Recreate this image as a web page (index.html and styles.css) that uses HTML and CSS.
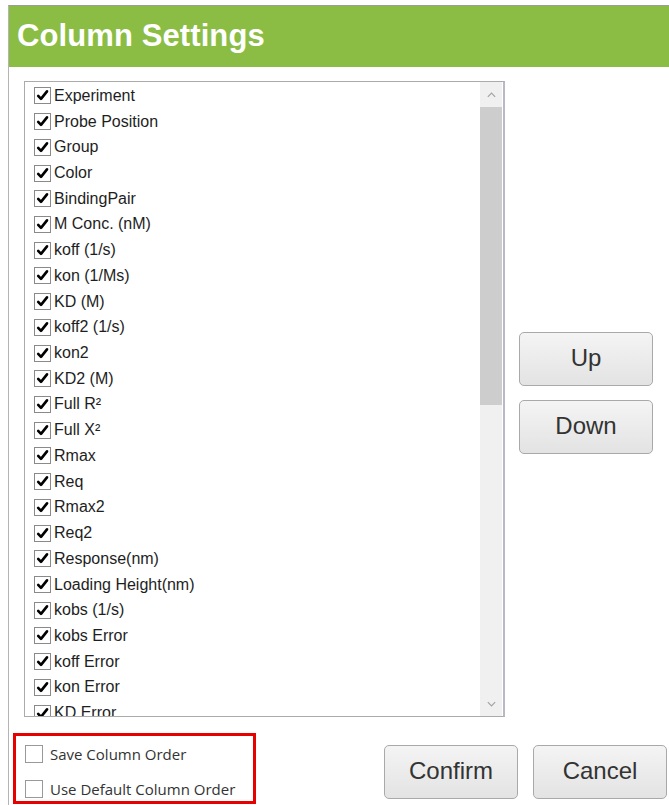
FILE: index.html
```html
<!DOCTYPE html>
<html lang="en">
<head>
<meta charset="utf-8">
<title>Column Settings</title>
<link rel="stylesheet" href="styles.css">
</head>
<body>
<div class="dialog">
  <header class="header"><h1 class="title">Column Settings</h1></header>

  <div class="main">
    <div class="listbox">
      <ul class="items">
        <li class="item"><span class="check"><svg viewBox="0 0 16 16"><path d="M3.4 8.4 L6.4 11.6 L12.8 3.6"/></svg></span>Experiment</li>
        <li class="item"><span class="check"><svg viewBox="0 0 16 16"><path d="M3.4 8.4 L6.4 11.6 L12.8 3.6"/></svg></span>Probe Position</li>
        <li class="item"><span class="check"><svg viewBox="0 0 16 16"><path d="M3.4 8.4 L6.4 11.6 L12.8 3.6"/></svg></span>Group</li>
        <li class="item"><span class="check"><svg viewBox="0 0 16 16"><path d="M3.4 8.4 L6.4 11.6 L12.8 3.6"/></svg></span>Color</li>
        <li class="item"><span class="check"><svg viewBox="0 0 16 16"><path d="M3.4 8.4 L6.4 11.6 L12.8 3.6"/></svg></span>BindingPair</li>
        <li class="item"><span class="check"><svg viewBox="0 0 16 16"><path d="M3.4 8.4 L6.4 11.6 L12.8 3.6"/></svg></span>M Conc. (nM)</li>
        <li class="item"><span class="check"><svg viewBox="0 0 16 16"><path d="M3.4 8.4 L6.4 11.6 L12.8 3.6"/></svg></span>koff (1/s)</li>
        <li class="item"><span class="check"><svg viewBox="0 0 16 16"><path d="M3.4 8.4 L6.4 11.6 L12.8 3.6"/></svg></span>kon (1/Ms)</li>
        <li class="item"><span class="check"><svg viewBox="0 0 16 16"><path d="M3.4 8.4 L6.4 11.6 L12.8 3.6"/></svg></span>KD (M)</li>
        <li class="item"><span class="check"><svg viewBox="0 0 16 16"><path d="M3.4 8.4 L6.4 11.6 L12.8 3.6"/></svg></span>koff2 (1/s)</li>
        <li class="item"><span class="check"><svg viewBox="0 0 16 16"><path d="M3.4 8.4 L6.4 11.6 L12.8 3.6"/></svg></span>kon2</li>
        <li class="item"><span class="check"><svg viewBox="0 0 16 16"><path d="M3.4 8.4 L6.4 11.6 L12.8 3.6"/></svg></span>KD2 (M)</li>
        <li class="item"><span class="check"><svg viewBox="0 0 16 16"><path d="M3.4 8.4 L6.4 11.6 L12.8 3.6"/></svg></span>Full R²</li>
        <li class="item"><span class="check"><svg viewBox="0 0 16 16"><path d="M3.4 8.4 L6.4 11.6 L12.8 3.6"/></svg></span>Full X²</li>
        <li class="item"><span class="check"><svg viewBox="0 0 16 16"><path d="M3.4 8.4 L6.4 11.6 L12.8 3.6"/></svg></span>Rmax</li>
        <li class="item"><span class="check"><svg viewBox="0 0 16 16"><path d="M3.4 8.4 L6.4 11.6 L12.8 3.6"/></svg></span>Req</li>
        <li class="item"><span class="check"><svg viewBox="0 0 16 16"><path d="M3.4 8.4 L6.4 11.6 L12.8 3.6"/></svg></span>Rmax2</li>
        <li class="item"><span class="check"><svg viewBox="0 0 16 16"><path d="M3.4 8.4 L6.4 11.6 L12.8 3.6"/></svg></span>Req2</li>
        <li class="item"><span class="check"><svg viewBox="0 0 16 16"><path d="M3.4 8.4 L6.4 11.6 L12.8 3.6"/></svg></span>Response(nm)</li>
        <li class="item"><span class="check"><svg viewBox="0 0 16 16"><path d="M3.4 8.4 L6.4 11.6 L12.8 3.6"/></svg></span>Loading Height(nm)</li>
        <li class="item"><span class="check"><svg viewBox="0 0 16 16"><path d="M3.4 8.4 L6.4 11.6 L12.8 3.6"/></svg></span>kobs (1/s)</li>
        <li class="item"><span class="check"><svg viewBox="0 0 16 16"><path d="M3.4 8.4 L6.4 11.6 L12.8 3.6"/></svg></span>kobs Error</li>
        <li class="item"><span class="check"><svg viewBox="0 0 16 16"><path d="M3.4 8.4 L6.4 11.6 L12.8 3.6"/></svg></span>koff Error</li>
        <li class="item"><span class="check"><svg viewBox="0 0 16 16"><path d="M3.4 8.4 L6.4 11.6 L12.8 3.6"/></svg></span>kon Error</li>
        <li class="item"><span class="check"><svg viewBox="0 0 16 16"><path d="M3.4 8.4 L6.4 11.6 L12.8 3.6"/></svg></span>KD Error</li>
      </ul>
      <div class="scrollbar">
        <div class="arrow"><svg viewBox="0 0 12 8"><path d="M2 6 L6 2 L10 6"/></svg></div>
        <div class="thumb"></div>
        <div class="track"></div>
        <div class="arrow"><svg viewBox="0 0 12 8"><path d="M2 2 L6 6 L10 2"/></svg></div>
      </div>
    </div>

    <div class="side">
      <button class="btn">Up</button>
      <button class="btn">Down</button>
    </div>
  </div>

  <footer class="footer">
    <div class="options">
      <label class="option"><span class="box"></span>Save Column Order</label>
      <label class="option"><span class="box"></span>Use Default Column Order</label>
    </div>
    <div class="actions">
      <button class="btn">Confirm</button>
      <button class="btn">Cancel</button>
    </div>
  </footer>
</div>
</body>
</html>
```

FILE: styles.css
```css
html, body {
  margin: 0;
  padding: 0;
  background: #ffffff;
}

body {
  width: 669px;
  height: 805px;
  overflow: hidden;
  font-family: "Liberation Sans", Arial, sans-serif;
}

.dialog {
  margin: 5px 0 0 8px;
  height: 800px;
  border-top: 1px solid #9c9c9c;
  border-left: 1px solid #b4b4b4;
  box-sizing: border-box;
}

/* green title bar */
.header {
  height: 61px;
  background: #8bbd44;
  display: flex;
  align-items: center;
  padding-left: 8px;
}

.title {
  margin: 0;
  color: #ffffff;
  font-size: 31px;
  font-weight: bold;
  letter-spacing: 0.1px;
  padding-bottom: 2px;
}

/* list + side buttons */
.main {
  display: flex;
  padding: 14px 0 0 15px;
}

.listbox {
  width: 481px;
  height: 636px;
  box-sizing: border-box;
  border: 1px solid #ababab;
  border-right: 2px solid #b9b9c6;
  display: flex;
  overflow: hidden;
}

.items {
  list-style: none;
  margin: 0;
  padding: 1px 0 0 9px;
  flex: 1;
  overflow: hidden;
}

.item {
  height: 25.72px;
  display: flex;
  align-items: center;
  font-size: 16px;
  color: #1e1e1e;
  white-space: nowrap;
}

.check {
  width: 17px;
  height: 17px;
  box-sizing: border-box;
  border: 1px solid #8a8a8a;
  margin-right: 3px;
  display: flex;
  background: #ffffff;
  flex: none;
}

.check svg {
  width: 15px;
  height: 15px;
}

.check path {
  fill: none;
  stroke: #000000;
  stroke-width: 2.8;
  stroke-linecap: round;
  stroke-linejoin: round;
}

/* scrollbar column */
.scrollbar {
  width: 22px;
  display: flex;
  flex-direction: column;
  background: #f0f0f0;
  flex: none;
  margin-right: 1px;
}

.arrow {
  height: 25px;
  display: flex;
  align-items: center;
  justify-content: center;
  flex: none;
}

.arrow svg {
  width: 11px;
  height: 8px;
}

.arrow path {
  fill: none;
  stroke: #a3a3a3;
  stroke-width: 1.3;
}

.thumb {
  height: 298px;
  background: #cdcdcd;
  flex: none;
}

.track {
  flex: 1;
}

.side {
  display: flex;
  flex-direction: column;
  gap: 14px;
  margin: 251px 0 0 14px;
}

/* push buttons */
.btn {
  width: 134px;
  height: 54px;
  box-sizing: border-box;
  border: 1px solid #a9a9a9;
  border-radius: 5px;
  background: linear-gradient(#f4f4f4, #e3e3e3);
  font-family: "Liberation Sans", Arial, sans-serif;
  font-size: 24px;
  color: #333333;
  padding: 0 0 2px;
}

/* footer */
.footer {
  display: flex;
  justify-content: space-between;
  padding: 16px 2px 0 4px;
}

.options {
  width: 243px;
  height: 71px;
  box-sizing: border-box;
  border: 3px solid #e60000;
  padding: 9px 0 0 9px;
  display: flex;
  flex-direction: column;
  gap: 17px;
}

.option {
  display: flex;
  align-items: center;
  height: 18px;
  font-family: "Open Sans", "Noto Sans", sans-serif;
  font-size: 15px;
  color: #333333;
  white-space: nowrap;
}

.box {
  width: 18px;
  height: 18px;
  box-sizing: border-box;
  border: 1px solid #999999;
  background: #ffffff;
  margin-right: 7px;
  flex: none;
}

.actions {
  display: flex;
  gap: 15px;
  padding-top: 12px;
}
```
